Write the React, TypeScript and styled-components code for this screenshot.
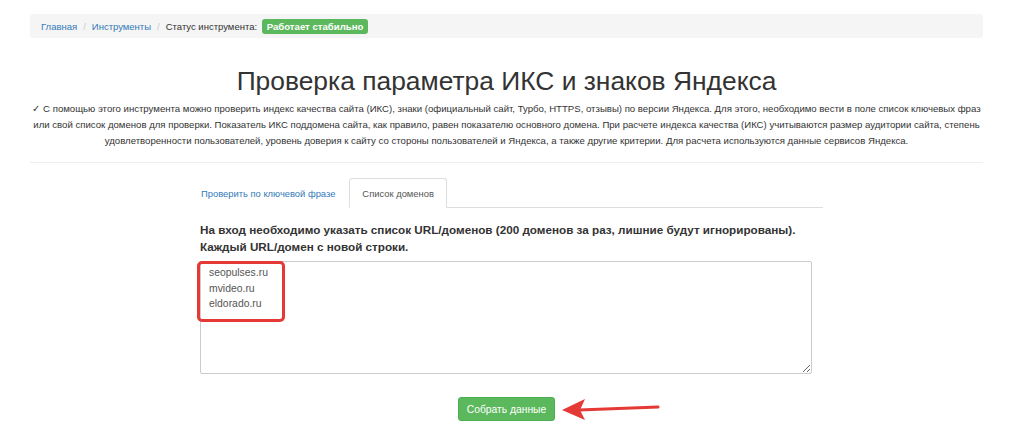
import React from "react";
import styled, { createGlobalStyle } from "styled-components";

const GlobalStyle = createGlobalStyle`
  html, body {
    margin: 0;
    padding: 0;
    background: #fff;
    font-family: "Liberation Sans", Arial, sans-serif;
    color: #333;
  }
`;

const Page = styled.div`
  width: 953px;
  padding: 14px 0 0 30px;
`;

const Breadcrumbs = styled.ol`
  display: flex;
  align-items: center;
  height: 24px;
  margin: 0;
  padding: 0 11px;
  list-style: none;
  background: #f5f5f5;
  border-radius: 3px;
  font-size: 9.5px;
`;

const Crumb = styled.li<{ $link?: boolean }>`
  color: ${(p) => (p.$link ? "#337ab7" : "#333")};
`;

const Separator = styled.li`
  color: #ccc;
  padding: 0 6px;
`;

const Badge = styled.span`
  display: inline-block;
  margin-left: 2px;
  padding: 3px 5px 2px;
  background: #5cb85c;
  color: #fff;
  font-weight: bold;
  font-size: 9.6px;
  border-radius: 3px;
  line-height: 10px;
`;

const Title = styled.h1`
  margin: 28px 0 0;
  text-align: center;
  font-size: 26.4px;
  font-weight: normal;
  line-height: 30px;
  color: #333;
`;

const Intro = styled.p`
  margin: 5px 0 0;
  text-align: center;
  white-space: nowrap;
  font-size: 9.6px;
  line-height: 16px;
  color: #333;
`;

const Divider = styled.hr`
  margin: 13px 0 0;
  border: 0;
  border-top: 1px solid #eee;
`;

const Panel = styled.div`
  width: 636px;
  margin: 15px 0 0 157px;
`;

const Tabs = styled.ul`
  display: flex;
  align-items: flex-start;
  margin: 0;
  padding: 0;
  list-style: none;
  border-bottom: 1px solid #ddd;
  height: 29px;
`;

const Tab = styled.li<{ $active?: boolean }>`
  box-sizing: border-box;
  height: 30px;
  padding: 0 ${(p) => (p.$active ? "12px" : "13px")};
  display: flex;
  align-items: center;
  font-size: 9.4px;
  color: ${(p) => (p.$active ? "#555" : "#337ab7")};
  background: #fff;
  border: 1px solid ${(p) => (p.$active ? "#ddd" : "transparent")};
  border-bottom-color: ${(p) => (p.$active ? "#fff" : "transparent")};
  border-radius: 3px 3px 0 0;
`;

const TabBody = styled.div`
  padding: 13px 11px 0 13px;
`;

const Label = styled.p`
  margin: 0;
  font-size: 11.7px;
  font-weight: bold;
  line-height: 17px;
  color: #333;
`;

const FieldWrap = styled.div`
  position: relative;
  margin-top: 6px;
`;

const DomainsArea = styled.textarea`
  display: block;
  box-sizing: border-box;
  width: 612px;
  height: 113px;
  margin: 0;
  padding: 3px 8px 2px;
  border: 1px solid #ccc;
  border-radius: 2px;
  font-family: "Liberation Sans", Arial, sans-serif;
  font-size: 10.4px;
  line-height: 15.5px;
  color: #555;
  resize: vertical;
  outline: none;
`;

const Highlight = styled.div`
  position: absolute;
  left: -3px;
  top: 0;
  box-sizing: border-box;
  width: 88px;
  height: 61px;
  border: 3px solid #e53935;
  border-radius: 5px;
  pointer-events: none;
`;

const Actions = styled.div`
  display: flex;
  align-items: center;
  margin: 22px 0 0 258px;
`;

const SubmitButton = styled.button`
  box-sizing: border-box;
  width: 97px;
  height: 24px;
  border: 1px solid #4cae4c;
  border-radius: 3px;
  background: #5cb85c;
  color: #fff;
  font-family: "Liberation Sans", Arial, sans-serif;
  font-size: 10.3px;
  padding: 0;
`;

const Pointer = styled.svg`
  display: block;
  margin-left: 6px;
`;

export default function App() {
  return (
    <>
      <GlobalStyle />
      <Page>
        <Breadcrumbs>
          <Crumb $link>Главная</Crumb>
          <Separator>/</Separator>
          <Crumb $link>Инструменты</Crumb>
          <Separator>/</Separator>
          <Crumb>
            Статус инструмента: <Badge>Работает стабильно</Badge>
          </Crumb>
        </Breadcrumbs>
        <Title>Проверка параметра ИКС и знаков Яндекса</Title>
        <Intro>
          ✓ С помощью этого инструмента можно проверить индекс качества сайта (ИКС), знаки (официальный сайт, Турбо, HTTPS, отзывы) по версии Яндекса. Для этого, необходимо вести в поле список ключевых фраз
          <br />
          или свой список доменов для проверки. Показатель ИКС поддомена сайта, как правило, равен показателю основного домена. При расчете индекса качества (ИКС) учитываются размер аудитории сайта, степень
          <br />
          удовлетворенности пользователей, уровень доверия к сайту со стороны пользователей и Яндекса, а также другие критерии. Для расчета используются данные сервисов Яндекса.
        </Intro>
        <Divider />
        <Panel>
          <Tabs>
            <Tab>Проверить по ключевой фразе</Tab>
            <Tab $active>Список доменов</Tab>
          </Tabs>
          <TabBody>
            <Label>
              На вход необходимо указать список URL/доменов (200 доменов за раз, лишние будут игнорированы).
              <br />
              Каждый URL/домен с новой строки.
            </Label>
            <FieldWrap>
              <DomainsArea defaultValue={"seopulses.ru\nmvideo.ru\neldorado.ru"} />
              <Highlight />
            </FieldWrap>
            <Actions>
              <SubmitButton>Собрать данные</SubmitButton>
              <Pointer width="100" height="26" viewBox="0 0 100 26">
                <line x1="18" y1="14" x2="97" y2="11" stroke="#e53935" strokeWidth="3" strokeLinecap="round" />
                <path d="M1 14 L24 3 L19 14 L24 24 Z" fill="#e53935" />
              </Pointer>
            </Actions>
          </TabBody>
        </Panel>
      </Page>
    </>
  );
}
